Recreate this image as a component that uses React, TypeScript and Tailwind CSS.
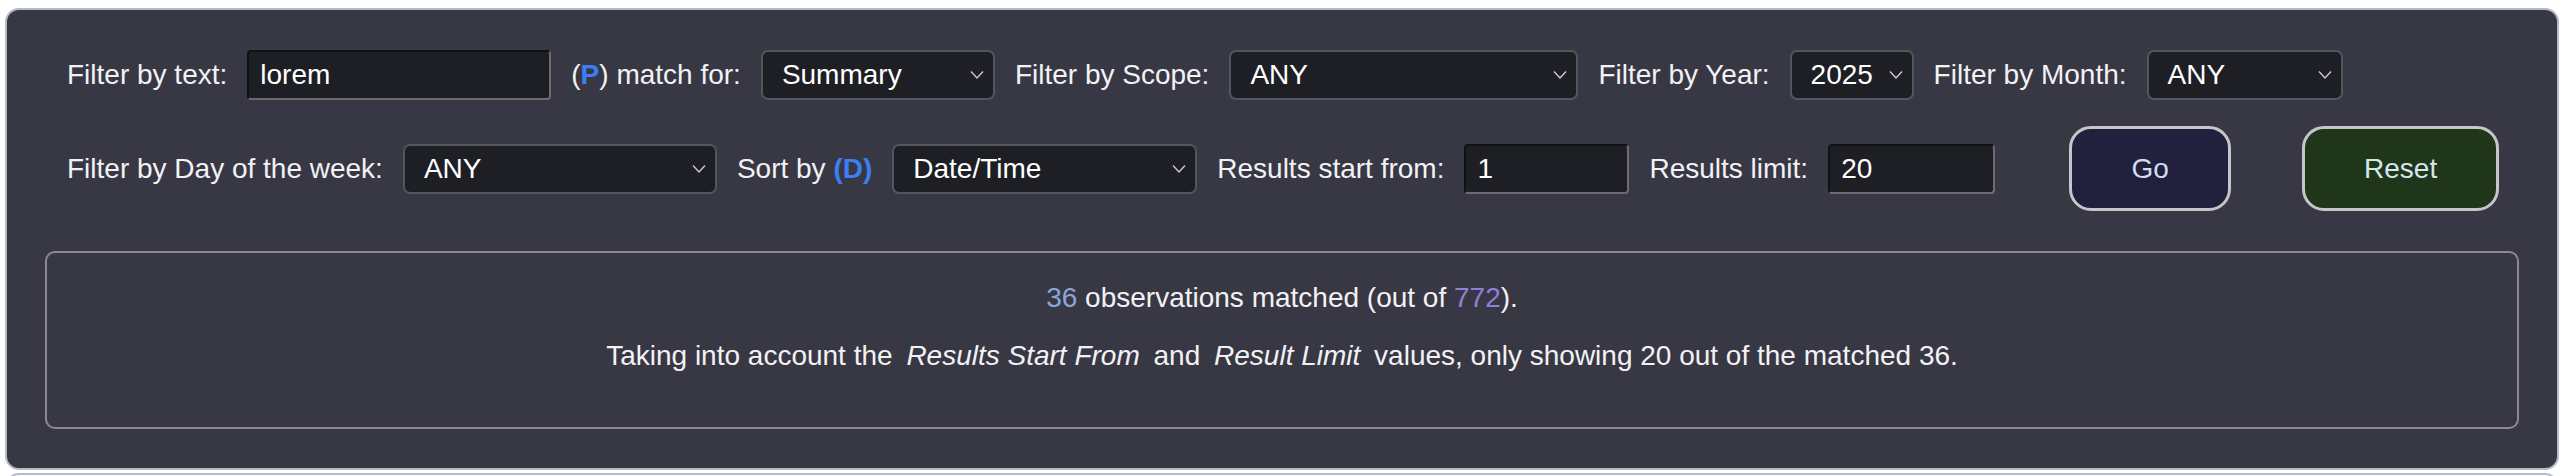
import type { ReactNode } from 'react'

const FONT = { fontFamily: '"Liberation Sans", Arial, Helvetica, sans-serif' }

function Chevron() {
  return (
    <svg width="14" height="9" viewBox="0 0 14 9" className="pointer-events-none absolute right-[11px] top-1/2 -translate-y-1/2">
      <polyline points="1,1 7,7.5 13,1" fill="none" stroke="#c9c9cf" strokeWidth="1.4" />
    </svg>
  )
}

function Select({ value, width }: { value: string; width: string }) {
  return (
    <div className={`relative h-[50px] shrink-0 ${width}`}>
      <div className="flex h-full items-center rounded-[7px] border-2 border-[#55555c] bg-[#1e1f25] pl-[19px] text-[28px] text-white">
        {value}
      </div>
      <Chevron />
    </div>
  )
}

function TextBox({ value, width }: { value: string; width: string }) {
  return (
    <div
      className={`flex h-[50px] shrink-0 items-center rounded-[4px] border-2 border-t-[#101114] border-l-[#101114] border-b-[#6b6b70] border-r-[#6b6b70] bg-[#1e1f25] pl-[11px] text-[28px] text-white ${width}`}
    >
      {value}
    </div>
  )
}

function Label({ children }: { children: ReactNode }) {
  return <span className="shrink-0 whitespace-nowrap text-[28px] text-[#f2f2f4]">{children}</span>
}

export default function App() {
  return (
    <div className="h-[476px] overflow-hidden bg-white px-[5px] pt-[8px]" style={FONT}>
      <div className="rounded-[14px] border-2 border-[#b3bbc8] bg-[#383845] px-[38px] pt-[40px] pb-[39px]">
        {/* Filters, first line */}
        <div className="flex h-[50px] items-center gap-[20px] pl-[22px]">
          <Label>Filter by text:</Label>
          <TextBox value="lorem" width="w-[304px]" />
          <Label>
            (<b className="text-[#3d7ff0]">P</b>) match for:
          </Label>
          <Select value="Summary" width="w-[234px]" />
          <Label>Filter by Scope:</Label>
          <Select value="ANY" width="w-[349px]" />
          <Label>Filter by Year:</Label>
          <Select value="2025" width="w-[124px]" />
          <Label>Filter by Month:</Label>
          <Select value="ANY" width="w-[196px]" />
        </div>

        {/* Filters, second line */}
        <div className="mt-[26px] flex h-[85px] items-center gap-[20px] pl-[22px]">
          <Label>Filter by Day of the week:</Label>
          <Select value="ANY" width="w-[314px]" />
          <Label>
            Sort by <b className="text-[#3d7ff0]">(D)</b>
          </Label>
          <Select value="Date/Time" width="w-[305px]" />
          <Label>Results start from:</Label>
          <TextBox value="1" width="w-[165px]" />
          <Label>Results limit:</Label>
          <TextBox value="20" width="w-[167px]" />
          <button
            type="button"
            className="ml-[54px] h-[85px] w-[162px] shrink-0 rounded-[22px] border-[3px] border-[#c6c6c8] bg-[#21213d] text-[28px] text-[#d2daf4]"
          >
            Go
          </button>
          <button
            type="button"
            className="ml-[51px] h-[85px] w-[197px] shrink-0 rounded-[22px] border-[3px] border-[#c6c6c8] bg-[#1f361b] text-[28px] text-[#d6e6ec]"
          >
            Reset
          </button>
        </div>

        {/* Match summary */}
        <div className="mt-[40px] flex h-[178px] flex-col items-center rounded-[10px] border-2 border-[#8a8a90] pt-[24px] text-[28px] leading-[42px] text-[#f2f2f4]">
          <p>
            <span className="text-[#8aa6d8]">36</span> observations matched (out of{' '}
            <span className="text-[#8f7fd6]">772</span>).
          </p>
          <p className="mt-[16px]">
            Taking into account the <i className="px-[6px]">Results Start From</i> and{' '}
            <i className="px-[6px]">Result Limit</i> values, only showing 20 out of the matched 36.
          </p>
        </div>
      </div>
      <div className="mt-[3px] h-[20px] rounded-t-[14px] border-2 border-[#b3bbc8] bg-white" />
    </div>
  )
}
